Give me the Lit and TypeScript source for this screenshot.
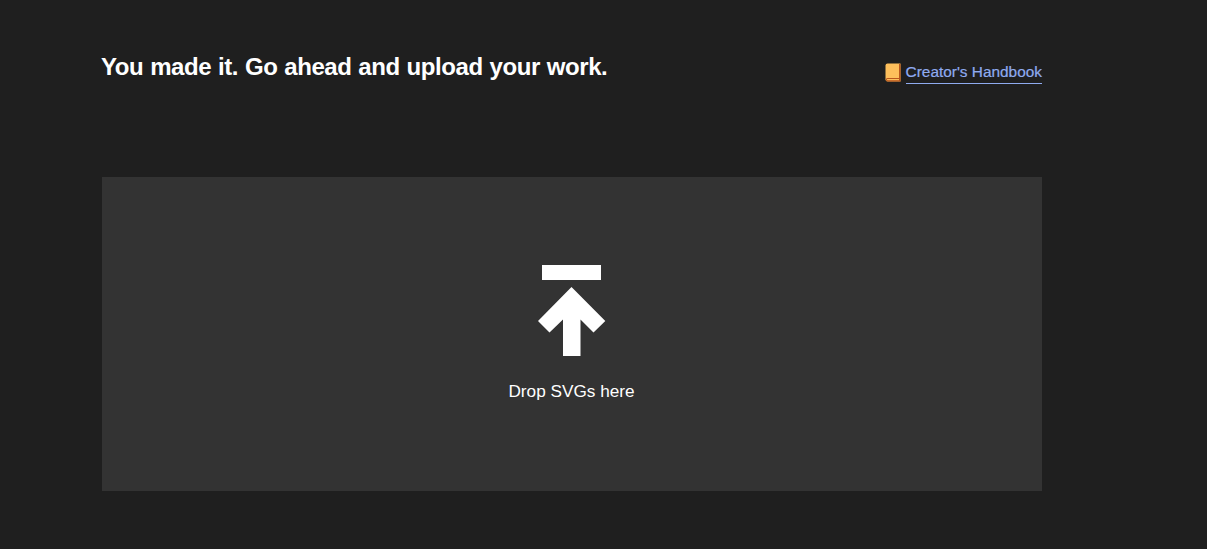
import { LitElement, html, css } from "lit";
import { customElement } from "lit/decorators.js";

@customElement("app-root")
export class AppRoot extends LitElement {
  static styles = css`
    :host {
      display: block;
      height: 549px;
      background: #1f1f1f;
      font-family: "Liberation Sans", Arial, sans-serif;
      color: #fff;
      overflow: hidden;
    }
    .page {
      width: 941px;
      margin-left: 101px;
      padding-top: 52px;
    }
    .top {
      display: flex;
      justify-content: space-between;
      align-items: flex-start;
      height: 125px;
    }
    h1 {
      margin: 0;
      font-size: 24px;
      line-height: 30px;
      font-weight: 700;
      letter-spacing: -0.42px;
      word-spacing: 0.6px;
    }
    .hand {
      display: flex;
      align-items: flex-start;
      gap: 5px;
      margin-top: 10px;
    }
    .hand svg {
      display: block;
      margin-top: 1px;
    }
    a {
      color: #8fabf0;
      font-size: 15.4px;
      line-height: 20px;
      padding-bottom: 1px;
      text-decoration: none;
      border-bottom: 1px solid #8fabf0;
      display: block;
      -webkit-text-stroke: 0.2px #8fabf0;
    }
    .drop {
      height: 314px;
      margin-left: 1px;
      padding: 88px 1px 0 0;
      background: #333333;
      display: flex;
      flex-direction: column;
      align-items: center;
      box-sizing: border-box;
    }
    .drop svg {
      display: block;
    }
    .label {
      margin-top: 24px;
      font-size: 17.2px;
      line-height: 22px;
    }
  `;

  render() {
    return html`
      <div class="page">
        <div class="top">
          <h1>You made it. Go ahead and upload your work.</h1>
          <div class="hand">
            <svg width="16" height="19" viewBox="0 0 16 19">
              <path d="M2.5 0.5H15.5V18.5H2.5Q0.5 18.5 0.5 16.5V2.5Q0.5 0.5 2.5 0.5Z" fill="#fdbf5b"/>
              <path d="M14 1V15H2.5Q0.8 15 0.8 16.5T2.5 18.5H15.5V1Z" fill="#b8551c"/>
              <path d="M2.5 16H14V17.2H2.5Q1.8 17.2 1.8 16.6T2.5 16Z" fill="#fdbf5b"/>
            </svg>
            <a href="#">Creator's Handbook</a>
          </div>
        </div>
        <div class="drop">
          <svg width="68" height="91" viewBox="0 0 68 91">
            <path d="M4 0H63V15H4Z" fill="#fff"/>
            <path d="M33.5 22L67.3 56L55.5 67.5L42.5 54.5V91H25V54.5L11.5 67.5L0 56Z" fill="#fff"/>
          </svg>
          <div class="label">Drop SVGs here</div>
        </div>
      </div>
    `;
  }
}
